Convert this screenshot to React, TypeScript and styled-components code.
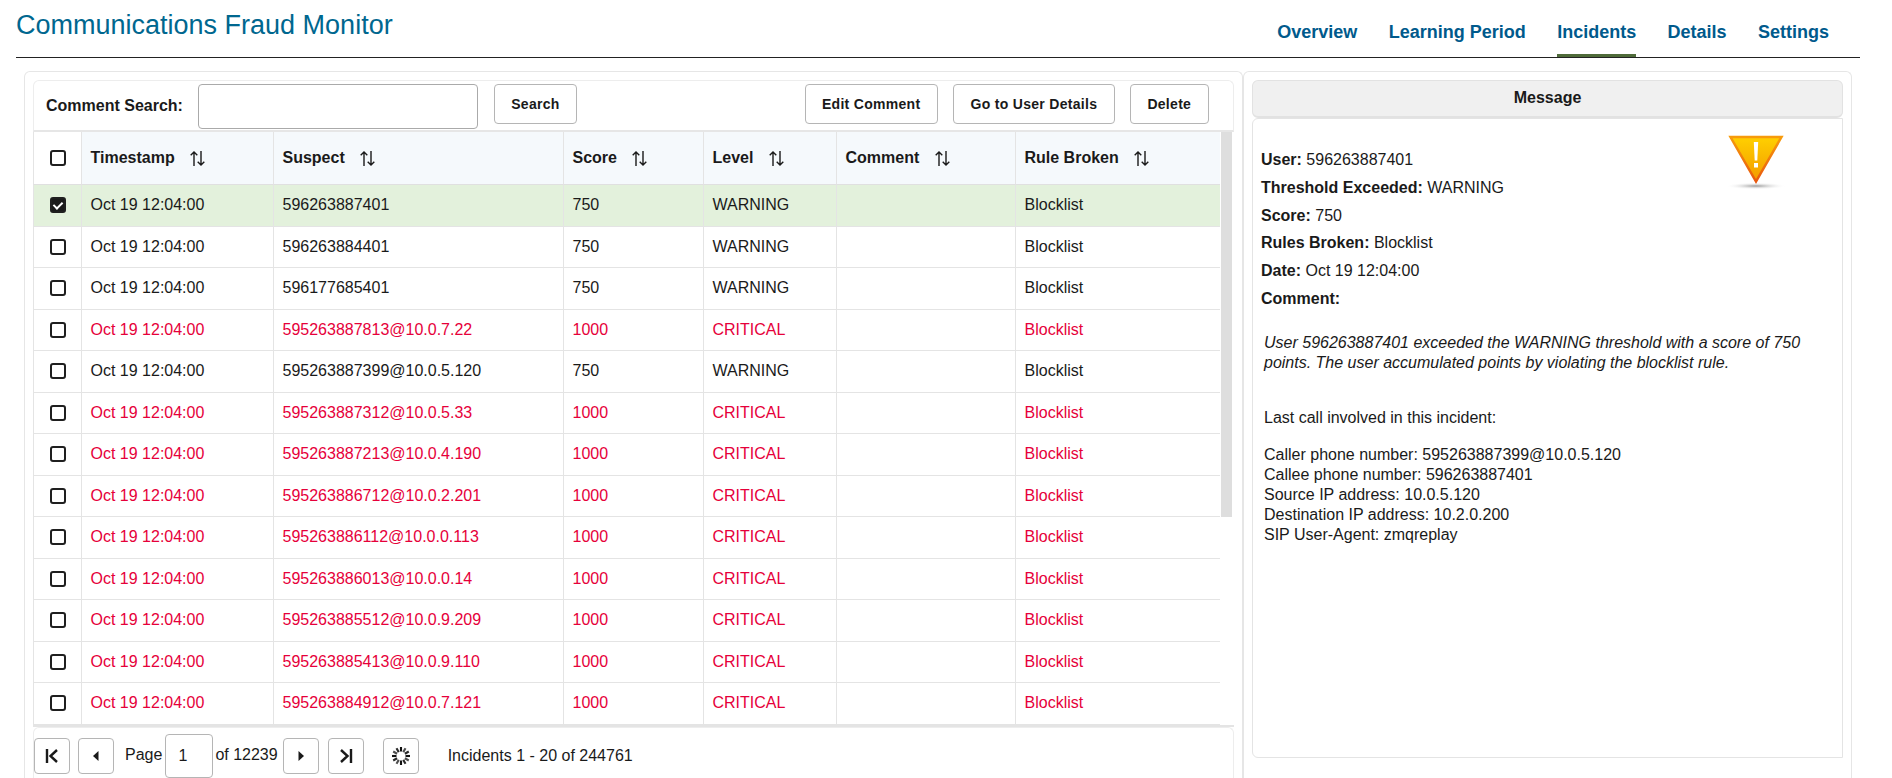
import styled, { createGlobalStyle } from 'styled-components';

const GlobalStyle = createGlobalStyle`
  html, body {
    margin: 0;
    height: 100%;
    overflow: hidden;
    background: #fff;
  }
  body {
    color: #1a1a1a;
    font-family: "Liberation Sans", Arial, sans-serif;
    font-size: 16px;
  }
`;

const Page = styled.div`
  display: flex;
  flex-direction: column;
  height: 778px;
  overflow: hidden;
`;

const Header = styled.header`
  display: flex;
  align-items: flex-start;
  justify-content: space-between;
  flex: none;
  height: 57px;
  margin: 0 32px 0 16px;
  border-bottom: 1px solid #222;
`;

const Title = styled.h1`
  margin: 9px 0 0;
  color: #00678f;
  font-size: 27px;
  font-weight: 400;
  line-height: 32px;
`;

const Nav = styled.nav`
  display: flex;
  height: 100%;
  padding-right: 31px;
`;

const Tab = styled.a<{ $active?: boolean }>`
  display: block;
  box-sizing: border-box;
  height: 100%;
  margin-left: 31.4px;
  padding-top: 21px;
  border-bottom: 3px solid ${({ $active }) => ($active ? '#4f6b3a' : 'transparent')};
  color: #005a8c;
  font-size: 18px;
  font-weight: 700;
  line-height: 22px;
`;

const Main = styled.main`
  display: flex;
  flex: 1;
  min-height: 0;
  padding: 13px 0 0 24px;
`;

const Panel = styled.section<{ $width: number }>`
  display: flex;
  flex-direction: column;
  flex: none;
  box-sizing: border-box;
  width: ${({ $width }) => $width}px;
  padding: 8px 8px 0;
  border: 1px solid #e6e6e6;
  border-bottom: 0;
  border-radius: 6px 6px 0 0;
`;

const Toolbar = styled.div`
  display: flex;
  align-items: flex-start;
  flex: none;
  box-sizing: border-box;
  height: 52px;
  padding: 3px 24.5px 0 12px;
  border: 1px solid #ededed;
  border-bottom: 2px solid #e6e6e6;
  border-radius: 6px 6px 0 0;
`;

const SearchLabel = styled.label`
  font-weight: 700;
  line-height: 44px;
`;

const SearchInput = styled.input`
  box-sizing: border-box;
  width: 280px;
  height: 45px;
  margin-left: 15px;
  border: 1px solid #aaa;
  border-radius: 4px;
`;

const ActionButton = styled.button`
  box-sizing: border-box;
  height: 40px;
  padding: 0 16.3px;
  border: 1px solid #b5b5b5;
  border-radius: 4px;
  background: #fff;
  color: #1a1a1a;
  font-family: inherit;
  font-size: 14px;
  font-weight: 700;
  letter-spacing: 0.3px;
`;

const SearchButton = styled(ActionButton)`
  margin-left: 16px;
`;

const EditButton = styled(ActionButton)`
  margin-left: auto;
`;

const SpacedButton = styled(ActionButton)`
  margin-left: 15.5px;
`;

const TableFrame = styled.div`
  position: relative;
  flex: none;
  border-bottom: 2px solid #e4e4e4;
`;

const ScrollThumb = styled.div`
  position: absolute;
  top: 0;
  right: 2px;
  width: 11px;
  height: 385px;
  background: #dedede;
`;

const Table = styled.table`
  width: 1187px;
  table-layout: fixed;
  border-collapse: separate;
  border-spacing: 0;
`;

const HeadCell = styled.th`
  box-sizing: border-box;
  height: 53px;
  padding: 0 8.5px;
  border-bottom: 1px solid #e0e0e0;
  border-left: 1px solid #e4e4e4;
  background: #f5f9fc;
  font-size: 16px;
  font-weight: 700;
  text-align: left;
  white-space: nowrap;
`;

const CheckHeadCell = styled(HeadCell)`
  padding: 0;
  background: #fff;
  text-align: center;
`;

const Row = styled.tr<{ $selected?: boolean; $critical?: boolean }>`
  background: ${({ $selected }) => ($selected ? '#e3f1dc' : '#fff')};
  color: ${({ $critical }) => ($critical ? '#e6003a' : '#1a1a1a')};
`;

const Cell = styled.td`
  box-sizing: border-box;
  height: 41.5px;
  padding: 0 8.5px;
  border-bottom: 1px solid #e4e4e4;
  border-left: 1px solid #e4e4e4;
  white-space: nowrap;
`;

const CheckCell = styled(Cell)`
  padding: 0;
  text-align: center;
`;

const Checkbox = styled.input.attrs({ type: 'checkbox' })`
  position: relative;
  display: block;
  box-sizing: border-box;
  width: 16px;
  height: 16px;
  margin: 0 auto;
  border: 2px solid #1f1f1f;
  border-radius: 3px;
  background: #fff;
  appearance: none;

  &:checked {
    background: #1a1a1a;
  }
  &:checked::after {
    content: '';
    position: absolute;
    top: 1px;
    left: 3px;
    width: 4px;
    height: 7px;
    border: solid #fff;
    border-width: 0 2px 2px 0;
    transform: rotate(45deg);
  }
`;

const SortGlyph = styled.svg`
  margin-left: 15.5px;
  vertical-align: -3px;
`;

const Pager = styled.div`
  display: flex;
  align-items: center;
  flex: none;
  box-sizing: border-box;
  height: 58px;
  border: 1px solid #ededed;
  border-bottom: 0;
  border-radius: 6px 6px 0 0;
`;

const PagerButton = styled.button<{ $gap?: number }>`
  display: flex;
  align-items: center;
  justify-content: center;
  flex: none;
  box-sizing: border-box;
  width: 36px;
  height: 36px;
  margin-left: ${({ $gap }) => $gap ?? 0}px;
  padding: 0;
  border: 1px solid #b5b5b5;
  border-radius: 4px;
  background: #fff;
`;

const PagerText = styled.span<{ $gap: number }>`
  margin-left: ${({ $gap }) => $gap}px;
  margin-bottom: 3px;
  white-space: nowrap;
`;

const PageInput = styled.input`
  box-sizing: border-box;
  flex: none;
  width: 48px;
  height: 44px;
  margin-left: 3px;
  padding: 0 0 0 12px;
  border: 1px solid #b5b5b5;
  border-radius: 4px;
  color: #1a1a1a;
  font-family: inherit;
  font-size: 16px;
`;

const Summary = styled.span`
  margin-left: 29px;
  white-space: nowrap;
`;

const MessageTitle = styled.div`
  flex: none;
  box-sizing: border-box;
  height: 38px;
  border: 1px solid #e2e2e2;
  border-bottom-width: 2px;
  border-radius: 6px;
  background: #f0f0f0;
  font-weight: 700;
  line-height: 34px;
  text-align: center;
`;

const MessageBody = styled.div`
  position: relative;
  flex: none;
  box-sizing: border-box;
  height: 640px;
  padding: 27px 8px 0;
  border: 1px solid #e4e4e4;
  border-radius: 6px 0 0 6px;
`;

const Fact = styled.div`
  line-height: 27.8px;
`;

const Label = styled.b`
  font-weight: 700;
`;

const Narrative = styled.p`
  margin: 20px 0 0 3px;
  font-style: italic;
  line-height: 20.5px;
`;

const Details = styled.p`
  margin: 34px 0 0 3px;
  line-height: 20px;
`;

const CallLines = styled(Details)`
  margin-top: 17px;
`;

const AlertIcon = styled.svg`
  position: absolute;
  top: 16px;
  right: 49px;
`;

const rows = [
  ['596263887401', 750],
  ['596263884401', 750],
  ['596177685401', 750],
  ['595263887813@10.0.7.22', 1000],
  ['595263887399@10.0.5.120', 750],
  ['595263887312@10.0.5.33', 1000],
  ['595263887213@10.0.4.190', 1000],
  ['595263886712@10.0.2.201', 1000],
  ['595263886112@10.0.0.113', 1000],
  ['595263886013@10.0.0.14', 1000],
  ['595263885512@10.0.9.209', 1000],
  ['595263885413@10.0.9.110', 1000],
  ['595263884912@10.0.7.121', 1000],
] as const;

const columns = [
  { name: 'Timestamp', width: 192 },
  { name: 'Suspect', width: 290 },
  { name: 'Score', width: 140 },
  { name: 'Level', width: 133 },
  { name: 'Comment', width: 179 },
  { name: 'Rule Broken', width: 205 },
];

const SortIcon = () => (
  <SortGlyph width="15" height="15" viewBox="0 0 15 15" fill="none" stroke="#1a1a1a" strokeWidth="1.4">
    <path d="M4 15V1M.7 4.300 4 1l3.300 3.300" />
    <path d="M11 0v14M7.700 10.700 11 14l3.300-3.300" />
  </SortGlyph>
);

const Spinner = () => (
  <svg width="20" height="20" viewBox="0 0 20 20">
    {Array.from({ length: 12 }, (_, i) => (
      <line
        key={i}
        x1="10"
        y1="1"
        x2="10"
        y2="5.500"
        stroke="#111"
        strokeOpacity={i % 3 === 0 ? 1 : 0.6 + (i % 3) * 0.15}
        strokeWidth="2.100"
        transform={`rotate(${i * 30} 10 10)`}
      />
    ))}
  </svg>
);

const App = () => (
  <>
    <GlobalStyle />
    <Page>
      <Header>
        <Title>Communications Fraud Monitor</Title>
        <Nav>
          <Tab>Overview</Tab>
          <Tab>Learning Period</Tab>
          <Tab $active>Incidents</Tab>
          <Tab>Details</Tab>
          <Tab>Settings</Tab>
        </Nav>
      </Header>
      <Main>
        <Panel $width={1219}>
          <Toolbar>
            <SearchLabel htmlFor="comment-search">Comment Search:</SearchLabel>
            <SearchInput id="comment-search" />
            <SearchButton>Search</SearchButton>
            <EditButton>Edit Comment</EditButton>
            <SpacedButton>Go to User Details</SpacedButton>
            <SpacedButton>Delete</SpacedButton>
          </Toolbar>
          <TableFrame>
            <Table>
              <colgroup>
                <col width={48} />
                {columns.map((c) => (
                  <col key={c.name} width={c.width} />
                ))}
              </colgroup>
              <thead>
                <tr>
                  <CheckHeadCell>
                    <Checkbox />
                  </CheckHeadCell>
                  {columns.map((c) => (
                    <HeadCell key={c.name}>
                      {c.name}
                      <SortIcon />
                    </HeadCell>
                  ))}
                </tr>
              </thead>
              <tbody>
                {rows.map(([suspect, score], i) => {
                  const critical = score === 1000;
                  return (
                    <Row key={suspect} $selected={i === 0} $critical={critical}>
                      <CheckCell>
                        <Checkbox defaultChecked={i === 0} />
                      </CheckCell>
                      <Cell>Oct 19 12:04:00</Cell>
                      <Cell>{suspect}</Cell>
                      <Cell>{score}</Cell>
                      <Cell>{critical ? 'CRITICAL' : 'WARNING'}</Cell>
                      <Cell />
                      <Cell>Blocklist</Cell>
                    </Row>
                  );
                })}
              </tbody>
            </Table>
            <ScrollThumb />
          </TableFrame>
          <Pager>
            <PagerButton>
              <svg width="18" height="18" viewBox="0 0 18 18" fill="none" stroke="#1a1a1a" strokeWidth="2.4">
                <path d="M4 2v14M14 3 7.500 9l6.500 6" />
              </svg>
            </PagerButton>
            <PagerButton $gap={8}>
              <svg width="10" height="12" viewBox="0 0 10 12" fill="#1a1a1a">
                <path d="M7.500 1v10L2 6z" />
              </svg>
            </PagerButton>
            <PagerText $gap={11}>Page</PagerText>
            <PageInput defaultValue="1" />
            <PagerText $gap={2}>of 12239</PagerText>
            <PagerButton $gap={5}>
              <svg width="10" height="12" viewBox="0 0 10 12" fill="#1a1a1a">
                <path d="M2.500 1v10L8 6z" />
              </svg>
            </PagerButton>
            <PagerButton $gap={9}>
              <svg width="18" height="18" viewBox="0 0 18 18" fill="none" stroke="#1a1a1a" strokeWidth="2.4">
                <path d="M14 2v14M4 3l6.500 6L4 15" />
              </svg>
            </PagerButton>
            <PagerButton $gap={19}>
              <Spinner />
            </PagerButton>
            <Summary>Incidents 1 - 20 of 244761</Summary>
          </Pager>
        </Panel>
        <Panel $width={609}>
          <MessageTitle>Message</MessageTitle>
          <MessageBody>
            <AlertIcon width="74" height="58" viewBox="0 0 74 58">
              <defs>
                <linearGradient id="alert-fill" x1="0" y1="0" x2="0" y2="1">
                  <stop offset="0" stopColor="#ffd000" />
                  <stop offset="1" stopColor="#f39a00" />
                </linearGradient>
                <linearGradient id="alert-edge" x1="0" y1="0" x2="0" y2="1">
                  <stop offset="0" stopColor="#f79b0c" />
                  <stop offset="1" stopColor="#e8580f" />
                </linearGradient>
                <radialGradient id="alert-shadow">
                  <stop offset="0" stopColor="#999" />
                  <stop offset="1" stopColor="#fff" stopOpacity="0" />
                </radialGradient>
              </defs>
              <ellipse cx="37" cy="51" rx="30" ry="3.500" fill="url(#alert-shadow)" />
              <path d="M11.500 2h51L37 46.500z" fill="url(#alert-fill)" stroke="url(#alert-edge)" strokeWidth="2.500" />
              <path d="M34.800 7h4.400l-.9 18.500h-2.600z" fill="#fff" />
              <rect x="35" y="28" width="4" height="4.500" fill="#fff" />
            </AlertIcon>
            <Fact><Label>User:</Label> 596263887401</Fact>
            <Fact><Label>Threshold Exceeded:</Label> WARNING</Fact>
            <Fact><Label>Score:</Label> 750</Fact>
            <Fact><Label>Rules Broken:</Label> Blocklist</Fact>
            <Fact><Label>Date:</Label> Oct 19 12:04:00</Fact>
            <Fact><Label>Comment:</Label></Fact>
            <Narrative>
              User 596263887401 exceeded the WARNING threshold with a score of 750 points. The user accumulated points by violating the blocklist rule.
            </Narrative>
            <Details>Last call involved in this incident:</Details>
            <CallLines>
              Caller phone number: 595263887399@10.0.5.120<br />
              Callee phone number: 596263887401<br />
              Source IP address: 10.0.5.120<br />
              Destination IP address: 10.2.0.200<br />
              SIP User-Agent: zmqreplay
            </CallLines>
          </MessageBody>
        </Panel>
      </Main>
    </Page>
  </>
);

export default App;
